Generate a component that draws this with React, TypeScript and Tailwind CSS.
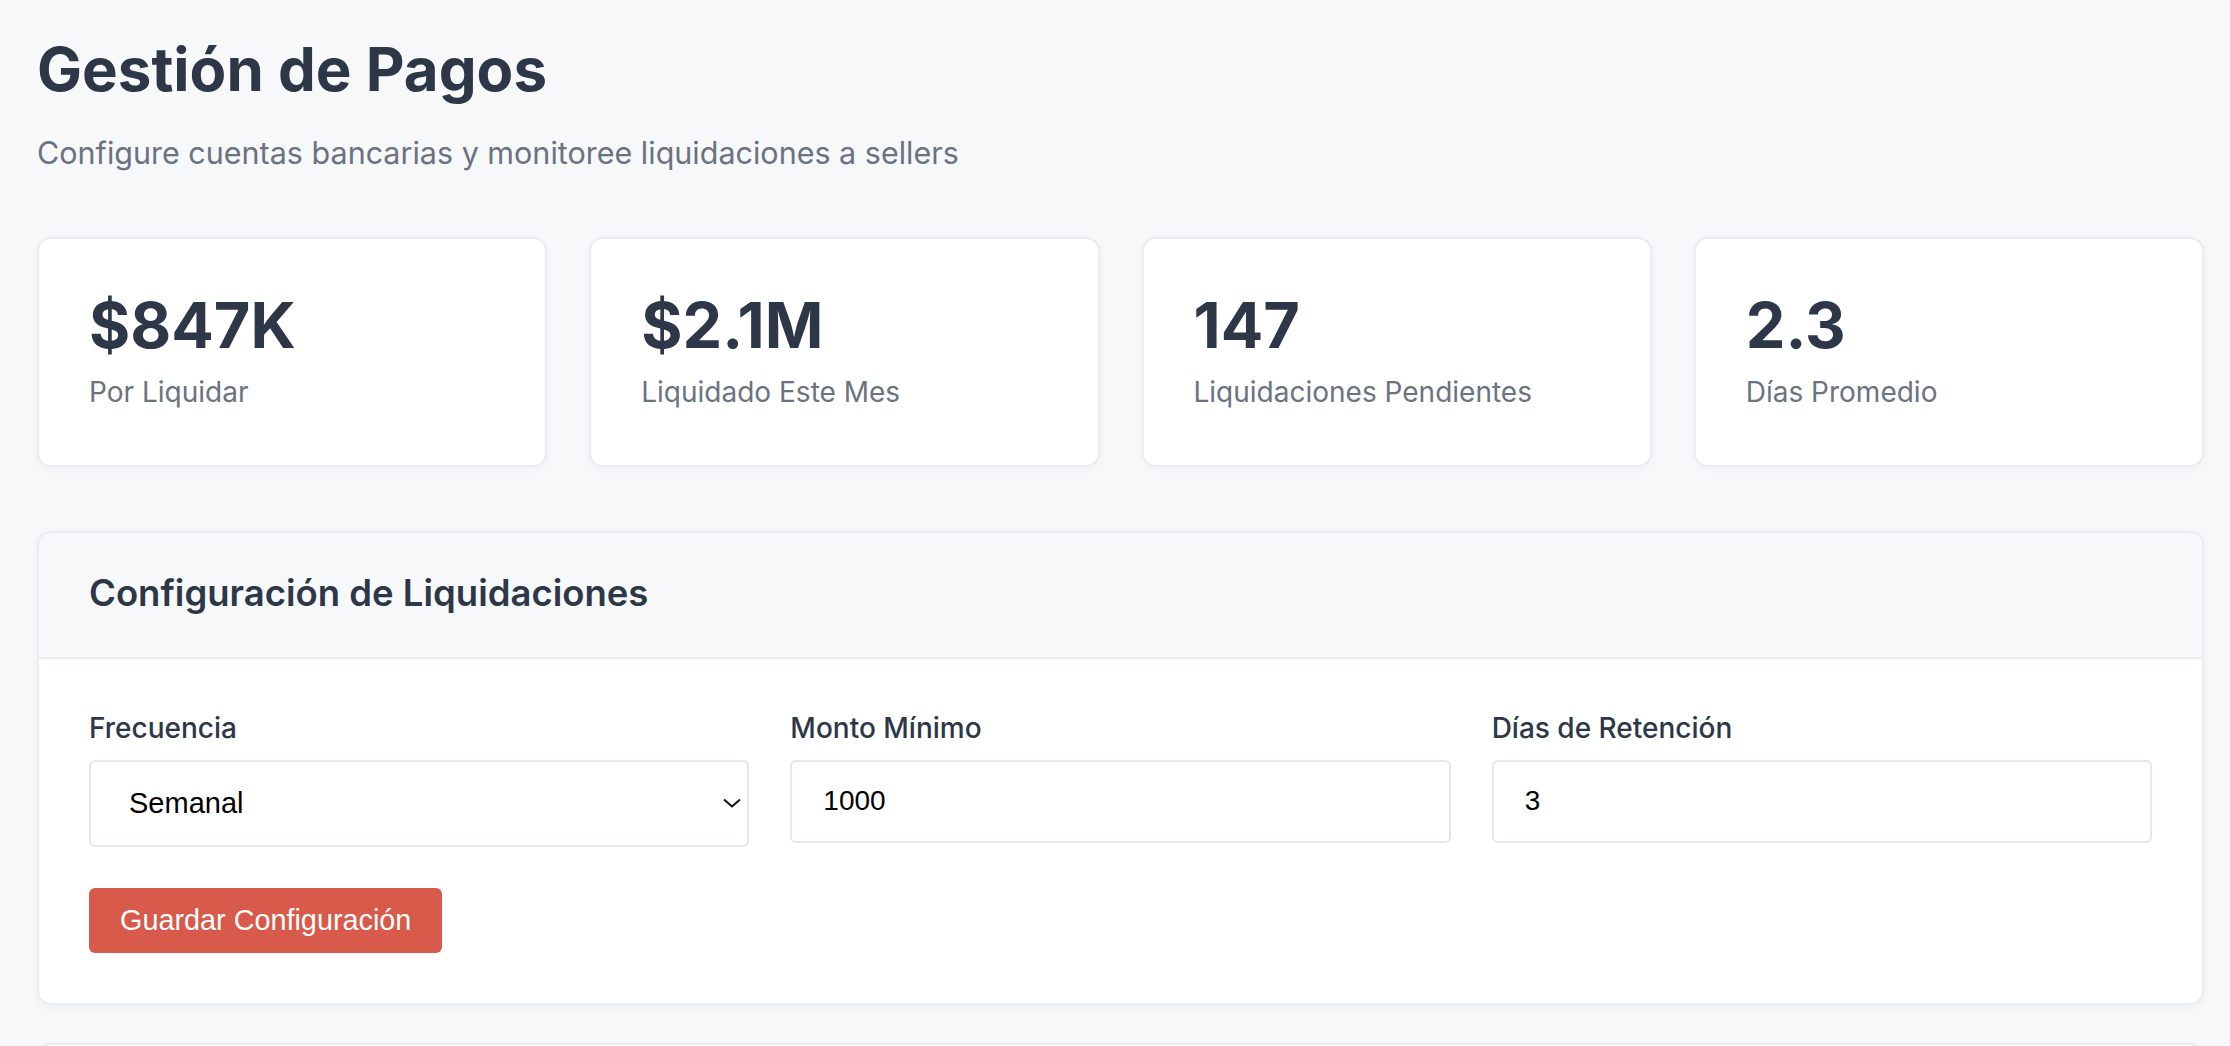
import React from 'react';

type Stat = {
  value: string;
  label: string;
};

const stats: Stat[] = [
  { value: '$847K', label: 'Por Liquidar' },
  { value: '$2.1M', label: 'Liquidado Este Mes' },
  { value: '147', label: 'Liquidaciones Pendientes' },
  { value: '2.3', label: 'Días Promedio' },
];

function StatCard({ stat }: { stat: Stat }) {
  return (
    <div className="bg-white border-2 border-[#e9ecf0] rounded-[14px] shadow-[0_2px_10px_rgba(15,23,42,0.04)] px-[50px] pt-[49px] pb-[52px]">
      <div className="text-[63px] leading-[1.2] font-bold text-[#2d3748]">{stat.value}</div>
      <div className="mt-[8px] text-[28px] leading-[1.5] text-[#6b7280]">{stat.label}</div>
    </div>
  );
}

function Field({ label, children }: { label: string; children: React.ReactNode }) {
  return (
    <div className="flex flex-col">
      <label className="text-[28px] leading-[1.5] font-medium text-[#2d3748] mb-[11px]">{label}</label>
      {children}
    </div>
  );
}

const inputFont = { fontFamily: '"Liberation Sans", Arial, sans-serif' };

export default function App() {
  return (
    <div
      className="min-h-screen bg-[#f7f8fa] pl-[37px] pr-[26px] pt-[33px]"
      style={{ fontFamily: 'Inter, "Noto Sans", sans-serif' }}
    >
      {/* Page header */}
      <h1 className="text-[60px] leading-[1.2] font-bold text-[#2d3748]">Gestión de Pagos</h1>
      <p className="mt-[25px] text-[30.5px] leading-[1.5] text-[#6b7280]">
        Configure cuentas bancarias y monitoree liquidaciones a sellers
      </p>

      {/* Stats */}
      <div className="mt-[61px] grid grid-cols-4 gap-[42px]">
        {stats.map((s) => (
          <StatCard key={s.label} stat={s} />
        ))}
      </div>

      {/* Settlement config */}
      <div className="mt-[64px] bg-white border-2 border-[#e9ecf0] rounded-[14px] overflow-hidden shadow-[0_2px_10px_rgba(15,23,42,0.04)]">
        <div className="bg-[#f7f8fa] border-b-2 border-[#e9ecf0] px-[50px] pt-[38px] pb-[40px]">
          <h2 className="text-[36.5px] leading-[1.25] font-semibold text-[#2d3748]">
            Configuración de Liquidaciones
          </h2>
        </div>
        <div className="px-[50px] pt-[48px] pb-[50px]">
          <div className="grid grid-cols-3 gap-[41px]">
            <Field label="Frecuencia">
              <div className="relative">
                <select
                  defaultValue="semanal"
                  className="w-full h-[87px] appearance-none bg-white border-2 border-[#e2e8f0] rounded-[6px] pl-[38px] pr-[40px] text-[29px] text-black"
                  style={inputFont}
                >
                  <option value="diaria">Diaria</option>
                  <option value="semanal">Semanal</option>
                  <option value="quincenal">Quincenal</option>
                  <option value="mensual">Mensual</option>
                </select>
                <svg
                  className="pointer-events-none absolute right-[8px] top-1/2 -translate-y-1/2"
                  width="18"
                  height="10"
                  viewBox="0 0 18 10"
                  fill="none"
                >
                  <path d="M1 1.5L9 8.5L17 1.5" stroke="#111" strokeWidth="2" />
                </svg>
              </div>
            </Field>
            <Field label="Monto Mínimo">
              <input
                type="number"
                defaultValue={1000}
                className="w-full h-[83px] bg-white border-2 border-[#e2e8f0] rounded-[6px] px-[31px] text-[28px] text-black outline-none"
                style={inputFont}
              />
            </Field>
            <Field label="Días de Retención">
              <input
                type="number"
                defaultValue={3}
                className="w-full h-[83px] bg-white border-2 border-[#e2e8f0] rounded-[6px] px-[31px] text-[28px] text-black outline-none"
                style={inputFont}
              />
            </Field>
          </div>
          <button
            className="mt-[41px] h-[65px] px-[31px] rounded-[6px] bg-[#d75a4a] text-white text-[28.8px]"
            style={inputFont}
          >
            Guardar Configuración
          </button>
        </div>
      </div>

      {/* Next section (cut off) */}
      <div className="mt-[38px] h-[120px] bg-white border-2 border-[#e9ecf0] rounded-[14px]" />
    </div>
  );
}
